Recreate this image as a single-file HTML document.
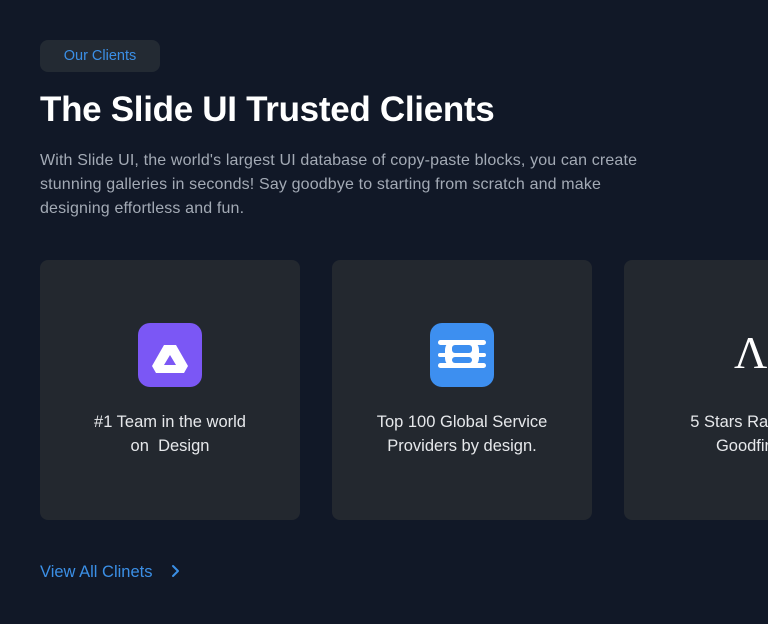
<!DOCTYPE html>
<html><head><style>
*{margin:0;padding:0;box-sizing:border-box}
body{width:768px;height:624px;overflow:hidden;background:#111827;font-family:"Liberation Sans",sans-serif;position:relative}
.badge{position:absolute;left:40px;top:40px;width:120px;height:32px;border-radius:8px;background:#232a33;color:#3b8fe6;font-size:14.5px;line-height:32px;text-align:center}
h1{position:absolute;left:40px;top:90px;font-size:35px;font-weight:700;color:#fff;letter-spacing:-0.3px}
p.d{position:absolute;left:40px;top:149px;width:628px;font-size:16px;line-height:24px;color:#a3aab5;letter-spacing:0.15px}
.card{position:absolute;top:260px;width:260px;height:260px;border-radius:8px;background:#23282f;overflow:hidden}
.ic{position:absolute;left:98px;top:63px;width:64px;height:64px;border-radius:12px}
.t{position:absolute;left:0;width:260px;top:150px;text-align:center;color:#e6e8eb;font-size:16.5px;line-height:24px}
.link{position:absolute;left:40px;top:563px;color:#3b8fe6;font-size:16.5px}
</style></head><body>
<div class="badge">Our Clients</div>
<h1>The Slide UI Trusted Clients</h1>
<p class="d">With Slide UI, the world's largest UI database of copy-paste blocks, you can create stunning galleries in seconds! Say goodbye to starting from scratch and make designing effortless and fun.</p>
<div class="card" style="left:40px">
<div class="ic" style="background:#7b57f5"><svg width="64" height="64" viewBox="0 0 64 64"><path fill="#fff" fill-rule="evenodd" d="M26 22h12l12 21-4 7H18l-4-7zM32 32l-6 10h12z"/></svg></div>
<div class="t">#1 Team in the world<br>on&nbsp; Design</div></div>
<div class="card" style="left:332px">
<div class="ic" style="background:#3d8ff0"><svg width="64" height="64" viewBox="0 0 64 64"><g fill="#fff"><rect x="15" y="17" width="34" height="28" rx="10"/><rect x="8" y="17" width="48" height="5" rx="2.5"/><rect x="8" y="30" width="48" height="4" rx="2"/><rect x="8" y="40" width="48" height="5" rx="2.5"/></g><rect x="22" y="22" width="20" height="8" rx="3" fill="#3d8ff0"/><rect x="22" y="34" width="20" height="6" rx="3" fill="#3d8ff0"/></svg></div>
<div class="t">Top 100 Global Service<br>Providers by design.</div></div>
<div class="card" style="left:624px;width:144px;border-radius:8px 0 0 8px">
<div style="position:absolute;left:110px;top:70px;font-family:'Liberation Serif',serif;font-size:46px;color:#fff;line-height:46px">Λ</div>
<div class="t">5 Stars Rating on<br>Goodfirms</div></div>
<div class="link">View All Clinets <svg style="margin-left:14px;vertical-align:-1px" width="10" height="14" viewBox="0 0 10 14"><path d="M2 2l5 5-5 5" stroke="#3b8fe6" stroke-width="2" fill="none" stroke-linecap="round" stroke-linejoin="round"/></svg></div>
</body></html>
